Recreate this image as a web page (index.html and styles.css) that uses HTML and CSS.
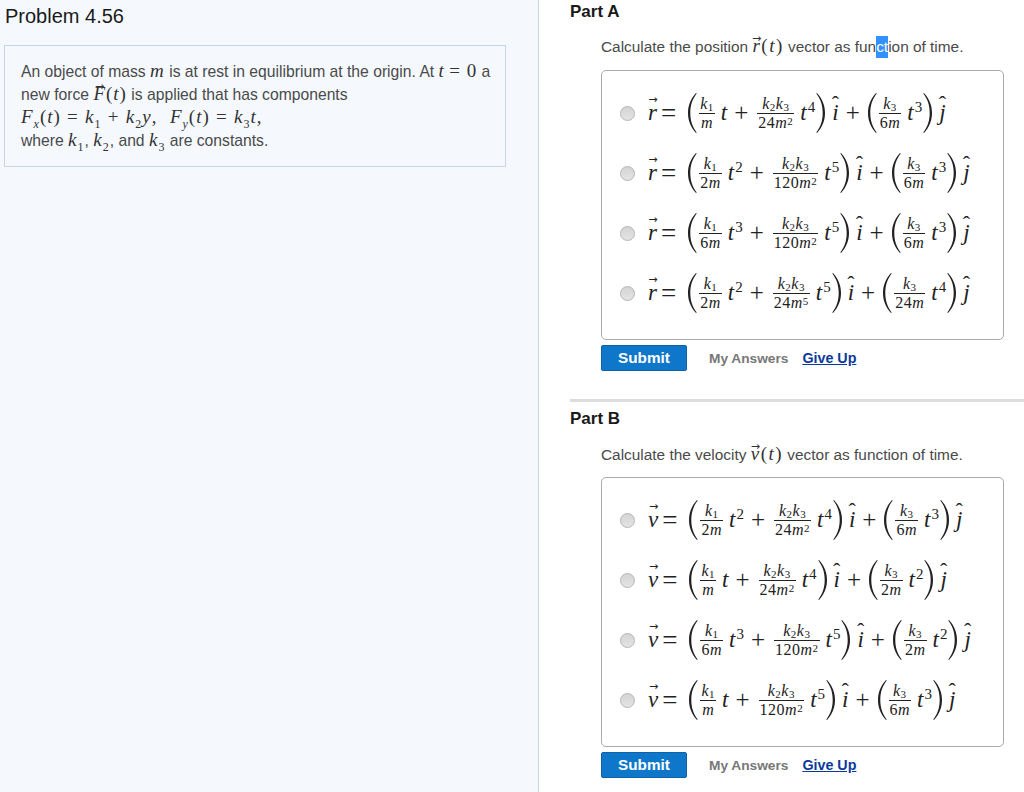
FILE: index.html
```html
<!DOCTYPE html>
<html lang="en">
<head>
    <meta charset="UTF-8">
    <title>Problem 4.56</title>
    <link rel="stylesheet" href="styles.css">
</head>
<body>
    <svg class="defs" width="0" height="0">
        <symbol id="paren" viewBox="0 0 10 40">
            <path d="M9 0C3.6 6 1 12.500 1 20S3.600 34 9 40L9.700 39.400C5.300 33.500 3.300 27.500 3.300 20S5.300 6.500 9.700.6Z"/>
        </symbol>
    </svg>
    <div class="page">
        <aside class="left">
            <h1>Problem 4.56</h1>
            <div class="intro">
                <div class="intro-line">An object of mass <i class="im">m</i> is at rest in equilibrium at the origin. At <i class="im">t</i> <span class="im-up">= 0</span> a</div>
                <div class="intro-line">new force <i class="im"><span class="vec vec-f">F</span></i><span class="im-up">(<i>t</i>)</span> is applied that has components</div>
                <div class="intro-line im-line"><i>F<sub>x</sub></i>(<i>t</i>) = <i>k</i><sub>1</sub> + <i>k</i><sub>2</sub><i>y</i>, &nbsp;<i>F<sub>y</sub></i>(<i>t</i>) = <i>k</i><sub>3</sub><i>t</i>,</div>
                <div class="intro-line">where <span class="im-up"><i>k</i><sub>1</sub></span>, <span class="im-up"><i>k</i><sub>2</sub></span>, and <span class="im-up"><i>k</i><sub>3</sub></span> are constants.</div>
            </div>
        </aside>
        <main class="right">
            <section class="part">
                <h2>Part A</h2>
                <p class="prompt">Calculate the position <span class="im-up"><i class="vec">r</i>(<i>t</i>)</span> vector as fun<span class="sel">ct</span>ion of time.</p>
                <div class="choices">
                    <label class="choice"><input type="radio" name="a"><span class="eq"><i class="vec">r</i><span class="eq-sign">=</span><svg class="paren"><use href="#paren"/></svg><span class="frac"><span><i>k</i><sub>1</sub></span><span><i>m</i></span></span><i class="t">t</i><span class="plus">+</span><span class="frac"><span><i>k</i><sub>2</sub><i>k</i><sub>3</sub></span><span>24<i>m</i><sup>2</sup></span></span><i class="t">t</i><sup>4</sup><svg class="paren close"><use href="#paren"/></svg><i class="hat">i</i><span class="plus">+</span><svg class="paren"><use href="#paren"/></svg><span class="frac"><span><i>k</i><sub>3</sub></span><span>6<i>m</i></span></span><i class="t">t</i><sup>3</sup><svg class="paren close"><use href="#paren"/></svg><i class="hat">j</i></span></label>
                    <label class="choice"><input type="radio" name="a"><span class="eq"><i class="vec">r</i><span class="eq-sign">=</span><svg class="paren"><use href="#paren"/></svg><span class="frac"><span><i>k</i><sub>1</sub></span><span>2<i>m</i></span></span><i class="t">t</i><sup>2</sup><span class="plus">+</span><span class="frac"><span><i>k</i><sub>2</sub><i>k</i><sub>3</sub></span><span>120<i>m</i><sup>2</sup></span></span><i class="t">t</i><sup>5</sup><svg class="paren close"><use href="#paren"/></svg><i class="hat">i</i><span class="plus">+</span><svg class="paren"><use href="#paren"/></svg><span class="frac"><span><i>k</i><sub>3</sub></span><span>6<i>m</i></span></span><i class="t">t</i><sup>3</sup><svg class="paren close"><use href="#paren"/></svg><i class="hat">j</i></span></label>
                    <label class="choice"><input type="radio" name="a"><span class="eq"><i class="vec">r</i><span class="eq-sign">=</span><svg class="paren"><use href="#paren"/></svg><span class="frac"><span><i>k</i><sub>1</sub></span><span>6<i>m</i></span></span><i class="t">t</i><sup>3</sup><span class="plus">+</span><span class="frac"><span><i>k</i><sub>2</sub><i>k</i><sub>3</sub></span><span>120<i>m</i><sup>2</sup></span></span><i class="t">t</i><sup>5</sup><svg class="paren close"><use href="#paren"/></svg><i class="hat">i</i><span class="plus">+</span><svg class="paren"><use href="#paren"/></svg><span class="frac"><span><i>k</i><sub>3</sub></span><span>6<i>m</i></span></span><i class="t">t</i><sup>3</sup><svg class="paren close"><use href="#paren"/></svg><i class="hat">j</i></span></label>
                    <label class="choice"><input type="radio" name="a"><span class="eq"><i class="vec">r</i><span class="eq-sign">=</span><svg class="paren"><use href="#paren"/></svg><span class="frac"><span><i>k</i><sub>1</sub></span><span>2<i>m</i></span></span><i class="t">t</i><sup>2</sup><span class="plus">+</span><span class="frac"><span><i>k</i><sub>2</sub><i>k</i><sub>3</sub></span><span>24<i>m</i><sup>5</sup></span></span><i class="t">t</i><sup>5</sup><svg class="paren close"><use href="#paren"/></svg><i class="hat">i</i><span class="plus">+</span><svg class="paren"><use href="#paren"/></svg><span class="frac"><span><i>k</i><sub>3</sub></span><span>24<i>m</i></span></span><i class="t">t</i><sup>4</sup><svg class="paren close"><use href="#paren"/></svg><i class="hat">j</i></span></label>
                </div>
                <div class="actions">
                    <button class="submit">Submit</button>
                    <span class="my-answers">My Answers</span>
                    <a class="give-up" href="#">Give Up</a>
                </div>
            </section>
            <section class="part part-b">
                <h2>Part B</h2>
                <p class="prompt">Calculate the velocity <span class="im-up"><i class="vec">v</i>(<i>t</i>)</span> vector as function of time.</p>
                <div class="choices">
                    <label class="choice"><input type="radio" name="b"><span class="eq"><i class="vec">v</i><span class="eq-sign">=</span><svg class="paren"><use href="#paren"/></svg><span class="frac"><span><i>k</i><sub>1</sub></span><span>2<i>m</i></span></span><i class="t">t</i><sup>2</sup><span class="plus">+</span><span class="frac"><span><i>k</i><sub>2</sub><i>k</i><sub>3</sub></span><span>24<i>m</i><sup>2</sup></span></span><i class="t">t</i><sup>4</sup><svg class="paren close"><use href="#paren"/></svg><i class="hat">i</i><span class="plus">+</span><svg class="paren"><use href="#paren"/></svg><span class="frac"><span><i>k</i><sub>3</sub></span><span>6<i>m</i></span></span><i class="t">t</i><sup>3</sup><svg class="paren close"><use href="#paren"/></svg><i class="hat">j</i></span></label>
                    <label class="choice"><input type="radio" name="b"><span class="eq"><i class="vec">v</i><span class="eq-sign">=</span><svg class="paren"><use href="#paren"/></svg><span class="frac"><span><i>k</i><sub>1</sub></span><span><i>m</i></span></span><i class="t">t</i><span class="plus">+</span><span class="frac"><span><i>k</i><sub>2</sub><i>k</i><sub>3</sub></span><span>24<i>m</i><sup>2</sup></span></span><i class="t">t</i><sup>4</sup><svg class="paren close"><use href="#paren"/></svg><i class="hat">i</i><span class="plus">+</span><svg class="paren"><use href="#paren"/></svg><span class="frac"><span><i>k</i><sub>3</sub></span><span>2<i>m</i></span></span><i class="t">t</i><sup>2</sup><svg class="paren close"><use href="#paren"/></svg><i class="hat">j</i></span></label>
                    <label class="choice"><input type="radio" name="b"><span class="eq"><i class="vec">v</i><span class="eq-sign">=</span><svg class="paren"><use href="#paren"/></svg><span class="frac"><span><i>k</i><sub>1</sub></span><span>6<i>m</i></span></span><i class="t">t</i><sup>3</sup><span class="plus">+</span><span class="frac"><span><i>k</i><sub>2</sub><i>k</i><sub>3</sub></span><span>120<i>m</i><sup>2</sup></span></span><i class="t">t</i><sup>5</sup><svg class="paren close"><use href="#paren"/></svg><i class="hat">i</i><span class="plus">+</span><svg class="paren"><use href="#paren"/></svg><span class="frac"><span><i>k</i><sub>3</sub></span><span>2<i>m</i></span></span><i class="t">t</i><sup>2</sup><svg class="paren close"><use href="#paren"/></svg><i class="hat">j</i></span></label>
                    <label class="choice"><input type="radio" name="b"><span class="eq"><i class="vec">v</i><span class="eq-sign">=</span><svg class="paren"><use href="#paren"/></svg><span class="frac"><span><i>k</i><sub>1</sub></span><span><i>m</i></span></span><i class="t">t</i><span class="plus">+</span><span class="frac"><span><i>k</i><sub>2</sub><i>k</i><sub>3</sub></span><span>120<i>m</i><sup>2</sup></span></span><i class="t">t</i><sup>5</sup><svg class="paren close"><use href="#paren"/></svg><i class="hat">i</i><span class="plus">+</span><svg class="paren"><use href="#paren"/></svg><span class="frac"><span><i>k</i><sub>3</sub></span><span>6<i>m</i></span></span><i class="t">t</i><sup>3</sup><svg class="paren close"><use href="#paren"/></svg><i class="hat">j</i></span></label>
                </div>
                <div class="actions">
                    <button class="submit">Submit</button>
                    <span class="my-answers">My Answers</span>
                    <a class="give-up" href="#">Give Up</a>
                </div>
            </section>
        </main>
    </div>
</body>
</html>
```

FILE: styles.css
```css
html, body {
    margin: 0;
    height: 100%;
    overflow: hidden;
}
body {
    font-family: "Liberation Sans", Arial, sans-serif;
    font-size: 15px;
    color: #4a4a4a;
    background-color: #fff;
}
.defs {
    position: absolute;
}
.page {
    display: flex;
    height: 792px;
}
.left {
    box-sizing: border-box;
    width: 539px;
    flex-shrink: 0;
    background-color: #f5f9fe;
    border-right: 1px solid #c5d6e6;
}
.left h1 {
    margin: 5px 0 0 5px;
    height: 23px;
    font-size: 20px;
    line-height: 23px;
    font-weight: normal;
    color: #1a1a1a;
}
.intro {
    box-sizing: border-box;
    width: 502px;
    height: 122px;
    margin: 17px 0 0 4px;
    padding: 12.500px 0 0 16px;
    border: 1px solid #c5d6e6;
    font-size: 15.700px;
}
.intro-line {
    height: 23px;
    line-height: 23px;
    white-space: nowrap;
}
.im, .im-up, .im-line {
    font-family: "Liberation Serif", "Times New Roman", serif;
    font-size: 19px;
    letter-spacing: 1px;
    color: #333;
}
.im-line {
    word-spacing: 0.500px;
}
.im-line sub, .im-up sub {
    font-size: 12px;
    line-height: 0;
}
.right {
    flex: 1;
    padding-left: 31px;
}
.part h2 {
    margin: 0;
    height: 24px;
    font-size: 17px;
    line-height: 24px;
    color: #1a1a1a;
}
.part-b {
    margin-top: 28px;
    padding-top: 5px;
    border-top: 3px solid #ddd;
}
.part-b .prompt {
    margin-top: 11px;
}
.part-b .choices {
    margin-top: 11px;
}
.prompt {
    margin: 10px 0 0 31px;
    height: 24px;
    font-size: 15.400px;
    line-height: 24px;
    white-space: nowrap;
}
.prompt .im-up {
    letter-spacing: 1.500px;
}
.sel {
    display: inline-block;
    line-height: 22px;
    color: #fff;
    background-color: #3390ff;
}
.choices {
    box-sizing: border-box;
    width: 403px;
    height: 270px;
    margin: 12px 0 0 31px;
    padding-top: 12px;
    border: 1px solid #aaa;
    border-radius: 5px;
}
.choice {
    display: flex;
    align-items: center;
    height: 60px;
    padding-left: 18px;
}
.choice input {
    appearance: none;
    box-sizing: border-box;
    width: 15px;
    height: 15px;
    margin: 0 13px 0 0;
    border: 1px solid #b5b5b5;
    border-radius: 50%;
    background: linear-gradient(#d4d4d4, #e4e4e4);
}
.eq {
    display: flex;
    align-items: center;
    font-family: "Liberation Serif", "Times New Roman", serif;
    font-size: 23px;
    color: #222;
    white-space: nowrap;
}
.eq > sup {
    align-self: flex-start;
    margin: 7px 0 0 1px;
    font-size: 15px;
    line-height: 1;
}
.eq-sign {
    margin: 0 11px 0 4px;
    font-size: 27px;
}
.paren {
    width: 10px;
    height: 40px;
    flex-shrink: 0;
    fill: #222;
}
.paren.close {
    margin-left: 1px;
    transform: scaleX(-1);
}
.frac {
    display: flex;
    flex-direction: column;
    align-items: center;
    margin: 0 6px 0 2px;
    font-size: 16px;
    line-height: 17px;
}
.frac > span {
    padding: 0 1px;
    letter-spacing: 0.500px;
}
.frac > span:first-child {
    padding-bottom: 1px;
    border-bottom: 1px solid #222;
    align-self: stretch;
    text-align: center;
}
.frac sub, .frac sup {
    font-size: 11px;
    line-height: 0;
}
.frac sub {
    vertical-align: -2px;
}
.frac sup {
    vertical-align: 3px;
}
.plus {
    margin: 0 7px;
    font-size: 25px;
}
.vec, .hat {
    position: relative;
    display: inline-block;
}
.vec::before {
    content: "\2192";
    position: absolute;
    left: -2px;
    right: -3px;
    top: -7px;
    text-align: center;
    font-family: "DejaVu Sans", sans-serif;
    font-style: normal;
    font-size: 11px;
}
.hat {
    margin-left: 6px;
}
.hat::before {
    content: "\02C6";
    position: absolute;
    left: -2px;
    right: -2px;
    top: -9px;
    text-align: center;
    font-style: normal;
    font-size: 22px;
}
.actions {
    display: flex;
    align-items: center;
    height: 26px;
    margin: 5px 0 0 31px;
}
.submit {
    width: 86px;
    height: 26px;
    padding: 0;
    border: 1px solid #0d62a8;
    border-radius: 2px;
    background-color: #0f77c9;
    color: #fff;
    font-family: "Liberation Sans", Arial, sans-serif;
    font-size: 15.300px;
    font-weight: bold;
}
.my-answers {
    margin-left: 22px;
    font-size: 13.700px;
    font-weight: bold;
    color: #777;
}
.give-up {
    margin-left: 14px;
    font-size: 14.300px;
    font-weight: bold;
    color: #0b3a9a;
}
```
